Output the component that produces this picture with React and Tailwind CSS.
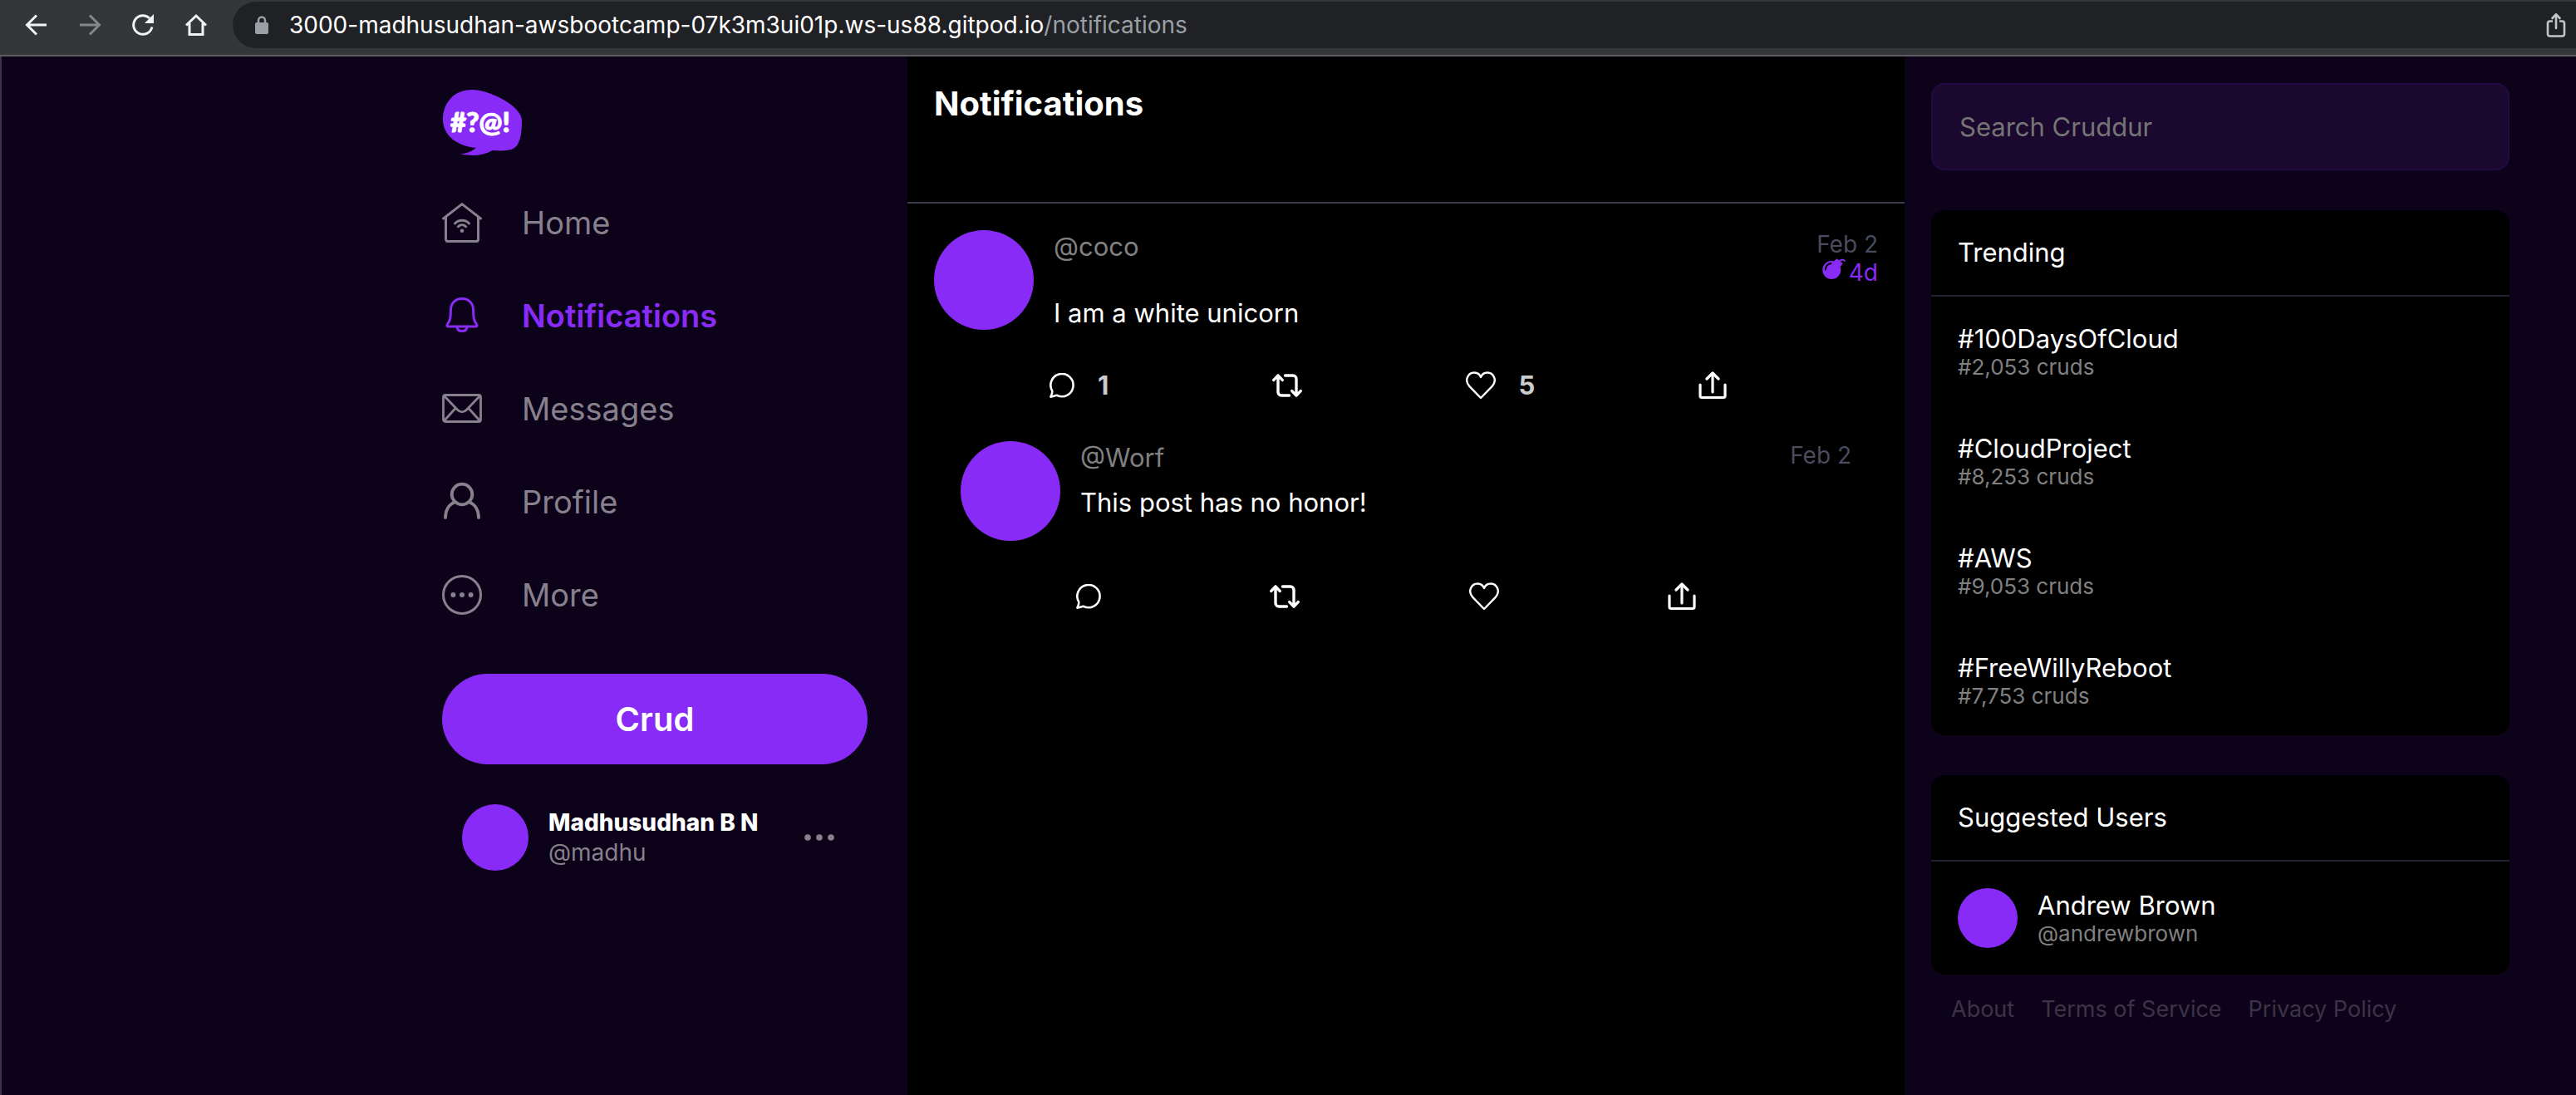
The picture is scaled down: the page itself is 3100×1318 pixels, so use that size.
import React from 'react';

function Icon({ w, h, sw = 3, className = '', children }) {
  return (
    <svg
      width={w}
      height={h}
      viewBox={`0 0 ${w} ${h}`}
      fill="none"
      stroke="currentColor"
      strokeWidth={sw}
      strokeLinecap="round"
      strokeLinejoin="round"
      aria-hidden="true"
      className={`shrink-0 ${className}`}
    >
      {children}
    </svg>
  );
}

/* Browser toolbar icons */
const BackIcon = () => (
  <Icon w={28} h={28} sw={3}>
    <path d="M26 14H3M14 2.5L2.5 14L14 25.5" strokeLinecap="butt" strokeLinejoin="miter" />
  </Icon>
);
const ForwardIcon = () => (
  <Icon w={28} h={28} sw={3}>
    <path d="M2 14H25M14 2.5L25.5 14L14 25.5" strokeLinecap="butt" strokeLinejoin="miter" />
  </Icon>
);
const ReloadIcon = () => (
  <Icon w={28} h={28} sw={3}>
    <path d="M25 16.5A11.3 11.3 0 1 1 22 6" strokeLinecap="butt" />
    <path d="M27 1V12H16Z" fill="currentColor" stroke="none" />
  </Icon>
);
const HomeChromeIcon = () => (
  <Icon w={28} h={28} sw={3}>
    <path d="M2 14.5L14 3L26 14.5M6 12V25.5H22V12" strokeLinecap="butt" strokeLinejoin="miter" />
  </Icon>
);
const LockIcon = () => (
  <Icon w={18} h={24} sw={2.5}>
    <path d="M5 10V6.5a4 4 0 0 1 8 0V10" />
    <rect x="1" y="9" width="16" height="14" rx="2" fill="currentColor" stroke="none" />
  </Icon>
);
const ShareChromeIcon = () => (
  <Icon w={24} h={30} sw={2.6}>
    <path d="M8 10.5H4.5a2.5 2.5 0 0 0-2.5 2.5V26a2.5 2.5 0 0 0 2.5 2.5h15A2.5 2.5 0 0 0 22 26V13a2.5 2.5 0 0 0-2.5-2.5H16" strokeLinecap="butt" />
    <path d="M12 19V2.5M7.5 7L12 2.2L16.5 7" />
  </Icon>
);

/* Sidebar icons */
const HomeIcon = () => (
  <Icon w={48} h={48}>
    <path d="M1.6 19L24 1.6L46.4 19M4.5 18V44a2.6 2.6 0 0 0 2.6 2.6H40.9a2.6 2.6 0 0 0 2.6-2.6V18" />
    <path d="M15.5 25C20 20 28 20 32.5 25M19.3 28.7C22 26 26 26 28.7 28.7" />
    <circle cx="24" cy="33.8" r="2.3" fill="currentColor" stroke="none" />
  </Icon>
);
const BellIcon = () => (
  <Icon w={48} h={48}>
    <path d="M24 3.6C15.500 3.600 10.400 9.500 10.400 17.500C10.400 25 10 28.500 8.300 31.200L6.400 34.200C5.400 36 6 37 7.800 37H40.200C42 37 42.600 36 41.600 34.200L39.700 31.200C38 28.500 37.600 25 37.600 17.500C37.600 9.500 32.500 3.600 24 3.600Z" />
    <path d="M18 37.500C18.400 41 20.700 42.600 24 42.600S29.600 41 30 37.500" />
  </Icon>
);
const MailIcon = () => (
  <Icon w={48} h={48} sw={2.8}>
    <rect x="1.5" y="7.500" width="45" height="32" rx="2.500" />
    <path d="M2.500 8.500L18 24.800C22 29 26 29 30 24.800L45.500 8.500M16 23.500L2.500 38.500M32 23.500L45.500 38.500" />
  </Icon>
);
const PersonIcon = () => (
  <Icon w={48} h={48} sw={3.8}>
    <circle cx="24" cy="15" r="12.300" />
    <path d="M4 43C4 34.500 8 27.500 14.800 24.600M44 43C44 34.500 40 27.500 33.200 24.600" />
  </Icon>
);
const MoreIcon = () => (
  <Icon w={48} h={48}>
    <circle cx="24" cy="24" r="22.500" />
    <g fill="currentColor" stroke="none">
      <circle cx="13.400" cy="24" r="3" />
      <circle cx="24" cy="24" r="3" />
      <circle cx="34.600" cy="24" r="3" />
    </g>
  </Icon>
);

/* Activity icons */
const ReplyIcon = () => (
  <Icon w={30} h={30} sw={2.6}>
    <path d="M1.400 28.600C2.700 26 3.600 23.500 3.200 21.400A13.600 13.600 0 1 1 9 26.800C6.500 27.200 4 28.200 1.400 28.600Z" />
  </Icon>
);
const RepostIcon = () => (
  <Icon w={36} h={28} sw={3.4}>
    <path d="M1.800 7.400L7 1.900L12.200 7.400M7 2.500V22a4 4 0 0 0 4 4H20.500M15.500 2H25a4 4 0 0 1 4 4V25.500M23.800 20.600L29 26.100L34.200 20.600" />
  </Icon>
);
const HeartIcon = () => (
  <Icon w={36} h={34} sw={2.4}>
    <path d="M18 32L4.500 18.200C-2.500 10.500 3 1.500 10 1.500C13.700 1.500 16.700 3.500 18 7C19.300 3.500 22.300 1.500 26 1.500C33 1.500 38.500 10.500 31.500 18.200Z" />
  </Icon>
);
const ShareIcon = () => (
  <Icon w={34} h={34} sw={3.2}>
    <path d="M2 16V29.500A2 2 0 0 0 4 31.500H30A2 2 0 0 0 32 29.500V16M17 25V2.500M10 9L17 2L24 9" />
  </Icon>
);
const BombIcon = () => (
  <Icon w={28} h={26} sw={2}>
    <circle cx="11.200" cy="14" r="11" fill="currentColor" stroke="none" />
    <path d="M14.500 4.500L17.500 1.500L23.500 6.500L20.500 9.500Z" fill="currentColor" />
    <path d="M20.500 4C22 1.500 25.500 1 27 3" />
    <path d="M3.800 13.500C4.200 9.500 6.500 6.500 10.500 6" stroke="#000000" />
  </Icon>
);

function Logo() {
  return (
    <svg width="98" height="80" viewBox="0 0 98 80" role="img" aria-label="Cruddur">
      <path
        d="M36 0C56 0 96 19 96 37C96 51 94.500 60 90.500 66.500C86 73.500 76 74 60.500 73C50 79 38 80.500 22.500 77.600C30 76.500 36 74 41 70C18 68 1 55 1 36C1 15 15 0 36 0Z"
        fill="#892bf6"
      />
      <text
        x="46"
        y="51"
        textAnchor="middle"
        fill="#ffffff"
        stroke="#ffffff"
        strokeWidth="1"
        strokeLinejoin="round"
        fontSize="33"
        fontWeight="900"
        fontFamily="Lato, sans-serif"
      >
        #?@!
      </text>
    </svg>
  );
}

const NAV = [
  { label: 'Home', icon: HomeIcon },
  { label: 'Notifications', icon: BellIcon, active: true },
  { label: 'Messages', icon: MailIcon },
  { label: 'Profile', icon: PersonIcon },
  { label: 'More', icon: MoreIcon },
];

const TRENDS = [
  ['#100DaysOfCloud', '#2,053 cruds'],
  ['#CloudProject', '#8,253 cruds'],
  ['#AWS', '#9,053 cruds'],
  ['#FreeWillyReboot', '#7,753 cruds'],
];

function BrowserBar() {
  return (
    <header className="flex h-[68px] items-start border-b-2 border-[#5f5f63] bg-[#35363a] pt-[2px]">
      <div className="flex h-14 shrink-0 items-center gap-9 pr-[30px] pl-[30px] text-[#f1f3f4]">
        <button type="button" aria-label="Back"><BackIcon /></button>
        <button type="button" aria-label="Forward" className="text-[#86878a]"><ForwardIcon /></button>
        <button type="button" aria-label="Reload"><ReloadIcon /></button>
        <button type="button" aria-label="Home page"><HomeChromeIcon /></button>
      </div>
      <div className="flex h-14 flex-1 items-center rounded-l-full bg-[#202124] pr-3 pl-[26px]">
        <span className="text-[#9aa0a6]"><LockIcon /></span>
        <span className="ml-6 flex-1 text-[28px] leading-[34px] text-white">
          3000-madhusudhan-awsbootcamp-07k3m3ui01p.ws-us88.gitpod.io
          <span className="text-[#9aa0a6]">/notifications</span>
        </span>
        <button type="button" aria-label="Share page" className="text-[#c4c5c7]"><ShareChromeIcon /></button>
      </div>
    </header>
  );
}

function Sidebar() {
  return (
    <div className="flex flex-1 justify-end border-l-2 border-[#3b3645] pt-10 pr-12">
      <div className="w-[512px]">
        <Logo />
        <nav className="mt-14 flex flex-col gap-16">
          {NAV.map(({ label, icon: Glyph, active }) => (
            <a
              key={label}
              href="#"
              className={`flex h-12 items-center gap-12 text-[38px] leading-[48px] ${
                active ? 'font-semibold text-[#892bf6]' : 'text-[#86818c]'
              }`}
            >
              <Glyph />
              {label}
            </a>
          ))}
        </nav>
        <button
          type="button"
          className="mt-[71px] h-[109px] w-full rounded-full bg-[#892bf6] text-[40px] leading-[48px] font-semibold text-white"
        >
          Crud
        </button>
        <button type="button" className="mt-12 flex w-full items-center pr-10 pl-6 text-left text-[28px]">
          <span className="size-20 shrink-0 rounded-full bg-[#892bf6]" />
          <span className="ml-6 flex-1">
            <span className="block leading-9 font-extrabold text-white">Madhusudhan B N</span>
            <span className="block leading-9 text-[#86818c]">@madhu</span>
          </span>
          <Icon w={36} h={8} className="text-[#86818c]">
            <g fill="currentColor" stroke="none">
              <circle cx="4" cy="4" r="3.800" />
              <circle cx="18" cy="4" r="3.800" />
              <circle cx="32" cy="4" r="3.800" />
            </g>
          </Icon>
        </button>
      </div>
    </div>
  );
}

function Action({ label, icon: Glyph, count }) {
  return (
    <button type="button" aria-label={label} className="flex h-[38px] items-center gap-7 text-white">
      <Glyph />
      {count && <span className="text-[31px] leading-[38px] font-bold text-[#cccccc]">{count}</span>}
    </button>
  );
}

function Post({ handle, message, date, expires, replies, likes, gap, actionsEnd }) {
  return (
    <article>
      <div className="flex gap-6">
        <span className="size-[120px] shrink-0 rounded-full bg-[#892bf6]" />
        <div className={`flex flex-1 flex-col text-[31px] leading-[40px] ${gap}`}>
          <a href="#" className="text-[#808080]">{handle}</a>
          <p className="text-white">{message}</p>
        </div>
        <div className="text-right text-[28px] leading-[34px]">
          <div className="text-[#4a4b5e]">{date}</div>
          {expires && (
            <div className="flex items-start justify-end gap-1 text-[#892bf6]">
              <BombIcon />
              <span>{expires}</span>
            </div>
          )}
        </div>
      </div>
      <div className={`mt-12 flex justify-between pl-[139px] ${actionsEnd}`}>
        <Action label="Reply" icon={ReplyIcon} count={replies} />
        <Action label="Repost" icon={RepostIcon} />
        <Action label="Like" icon={HeartIcon} count={likes} />
        <Action label="Share" icon={ShareIcon} />
      </div>
    </article>
  );
}

function Feed() {
  return (
    <main className="w-[1200px] bg-black">
      <div className="border-b-2 border-[#3a3c4b] px-8 pt-8 pb-[93px]">
        <h1 className="text-[40px] leading-[50px] font-bold text-white">Notifications</h1>
      </div>
      <div className="flex flex-col gap-12 p-8">
        <Post
          handle="@coco"
          message="I am a white unicorn"
          date="Feb 2"
          expires="4d"
          replies="1"
          likes="5"
          gap="gap-10"
          actionsEnd="pr-[182px]"
        />
        <div className="px-8">
          <Post handle="@Worf" message="This post has no honor!" date="Feb 2" gap="gap-[14px]" actionsEnd="pr-[187px]" />
        </div>
      </div>
    </main>
  );
}

function Card({ title, children }) {
  return (
    <section className="mt-12 rounded-2xl bg-black text-[31px] leading-[38px] text-white">
      <h2 className="border-b-2 border-[#20232f] p-8">{title}</h2>
      {children}
    </section>
  );
}

function Aside() {
  return (
    <aside className="w-[808px] py-8 pr-20 pl-8">
      <input
        type="text"
        aria-label="Search Cruddur"
        placeholder="Search Cruddur"
        className="block h-[105px] w-full rounded-2xl border-2 border-[#220b42] bg-[#1a082f] px-8 text-[31px] leading-[38px] text-white placeholder:text-[#757575]"
      />
      <Card title="Trending">
        <ul className="flex flex-col gap-16 p-8">
          {TRENDS.map(([tag, count]) => (
            <li key={tag}>
              <a href="#" className="block">
                <span className="block">{tag}</span>
                <span className="block text-[26px] leading-[30px] text-[#808080]">{count}</span>
              </a>
            </li>
          ))}
        </ul>
      </Card>
      <Card title="Suggested Users">
        <a href="#" className="flex items-center gap-6 p-8">
          <span className="size-[72px] shrink-0 rounded-full bg-[#892bf6]" />
          <span>
            <span className="block">Andrew Brown</span>
            <span className="block text-[26px] leading-[30px] text-[#808080]">@andrewbrown</span>
          </span>
        </a>
      </Card>
      <footer className="flex gap-8 px-6 py-6 text-[27px] leading-9 text-[#3c3347]">
        <a href="#">About</a>
        <a href="#">Terms of Service</a>
        <a href="#">Privacy Policy</a>
      </footer>
    </aside>
  );
}

export default function App() {
  return (
    <div className="flex min-h-screen flex-col bg-[#0c0219] font-['Inter',sans-serif] antialiased">
      <BrowserBar />
      <div className="flex flex-1">
        <Sidebar />
        <Feed />
        <Aside />
      </div>
    </div>
  );
}
